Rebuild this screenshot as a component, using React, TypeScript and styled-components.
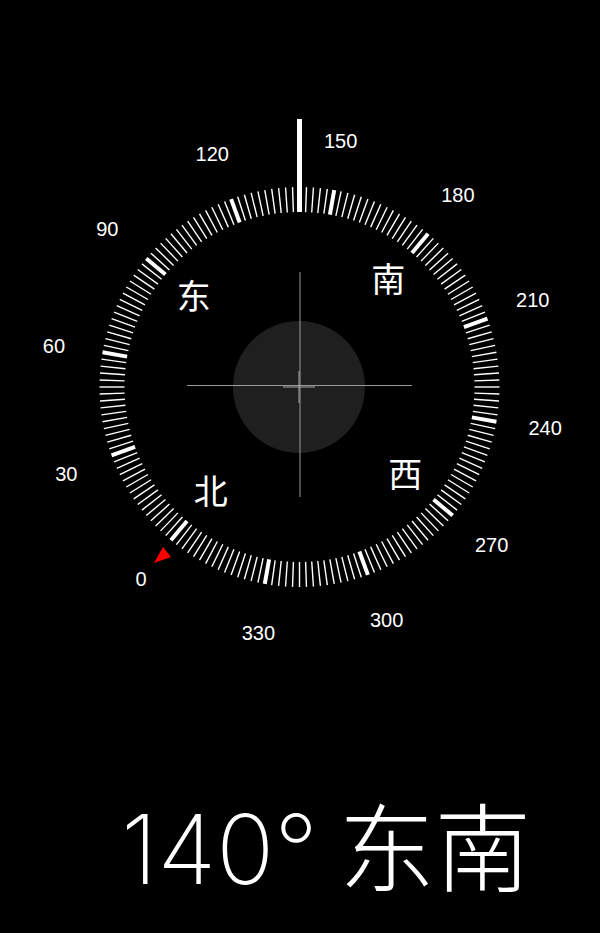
import React from "react";
import styled, { createGlobalStyle } from "styled-components";

const GlobalStyle = createGlobalStyle`
  html, body {
    margin: 0;
    padding: 0;
    background: #000;
  }
`;

const CX = 299.5;
const CY = 387;
const HEADING = 140;

const Screen = styled.div`
  width: 600px;
  height: 933px;
  background: #000;
  display: flex;
  flex-direction: column;
  overflow: hidden;
`;

const Dial = styled.svg`
  display: block;
  width: 600px;
  height: 700px;
  flex-shrink: 0;
`;

const DegreeLabel = styled.text`
  font-family: "Liberation Sans", Arial, sans-serif;
  font-size: 20px;
  fill: #fff;
`;

const CardinalLabel = styled.text`
  font-family: "Noto Sans CJK SC", sans-serif;
  font-size: 34px;
  fill: #fff;
`;

const HeadingText = styled.div`
  margin-top: 101px;
  padding-left: 121px;
  font-family: "Inter", "Noto Sans CJK SC", sans-serif;
  font-weight: 200;
  font-size: 96px;
  line-height: 96px;
  word-spacing: -6px;
  color: #fff;
  white-space: nowrap;
`;

function polar(angle: number, r: number): [number, number] {
  const a = (angle * Math.PI) / 180;
  return [CX + r * Math.sin(a), CY - r * Math.cos(a)];
}

const cardinals = [
  { deg: 0, label: "北" },
  { deg: 90, label: "东" },
  { deg: 180, label: "南" },
  { deg: 270, label: "西" },
];

function renderTicks() {
  const ticks = [];
  for (let d = 0; d < 360; d += 2) {
    const screen = d - HEADING;
    const [x1, y1] = polar(screen, 175);
    const [x2, y2] = polar(screen, 200);
    const major = d % 30 === 0;
    ticks.push(
      <line
        key={d}
        x1={x1}
        y1={y1}
        x2={x2}
        y2={y2}
        stroke="#fff"
        strokeWidth={major ? 4 : 1.4}
      />
    );
  }
  return ticks;
}

function renderDegrees() {
  const labels = [];
  for (let d = 0; d < 360; d += 30) {
    const [x, y] = polar(d - HEADING - 0.5, 249);
    labels.push(
      <DegreeLabel key={d} x={x} y={y + 7} textAnchor="middle">
        {d}
      </DegreeLabel>
    );
  }
  return labels;
}

function renderCardinals() {
  return cardinals.map((c) => {
    const [x, y] = polar(c.deg - HEADING, 138);
    return (
      <CardinalLabel key={c.deg} x={x} y={y + 11} textAnchor="middle">
        {c.label}
      </CardinalLabel>
    );
  });
}

export default function App() {
  return (
    <Screen>
      <GlobalStyle />
      <Dial viewBox="0 0 600 700">
        <circle cx={299} cy={387} r={66} fill="#1f1f1f" />
        <line x1={187} y1={385.5} x2={412} y2={385.5} stroke="#9a9a9a" strokeWidth={1} />
        <line x1={300} y1={272} x2={300} y2={497} stroke="#9a9a9a" strokeWidth={1} />
        <line x1={283} y1={387} x2={315} y2={387} stroke="#a8a8a8" strokeWidth={1} />
        <line x1={299} y1={371} x2={299} y2={403} stroke="#a8a8a8" strokeWidth={1} />
        {renderTicks()}
        <rect x={297} y={119} width={5} height={93} fill="#fff" />
        <polygon points="163,547 154,563 171,557" fill="#ff0000" />
        {renderDegrees()}
        {renderCardinals()}
      </Dial>
      <HeadingText>140° 东南</HeadingText>
    </Screen>
  );
}
